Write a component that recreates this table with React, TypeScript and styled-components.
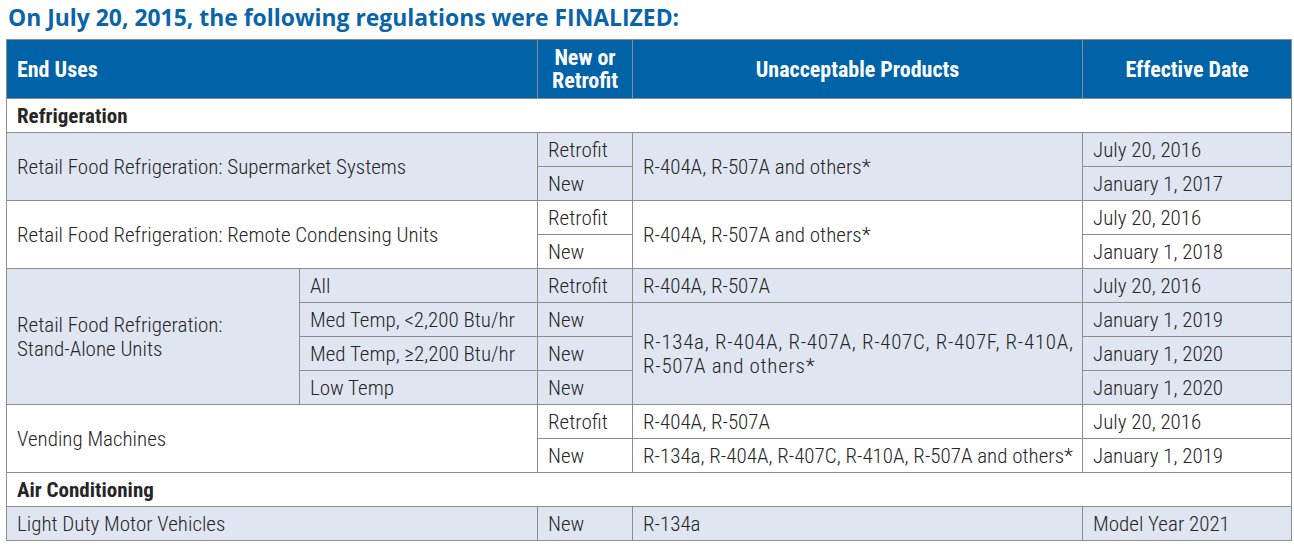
import React from 'react'
import styled, { createGlobalStyle } from 'styled-components'

const Global = createGlobalStyle`
  body {
    margin: 0;
    background: #ffffff;
    font-family: "Roboto Condensed", Roboto, sans-serif;
    color: #262626;
  }
`

const Page = styled.main`
  padding-left: 6px;
`

const Title = styled.h2`
  margin: 0 0 6px;
  padding: 3px 0 0 2px;
  font-family: 'Open Sans', sans-serif;
  font-size: 22.9px;
  line-height: 30px;
  font-weight: 700;
  color: #0a64a8;
  white-space: nowrap;
`

const Table = styled.table`
  width: 1285px;
  border-collapse: collapse;
  table-layout: fixed;
  font-size: 21px;
  font-weight: 300;
  line-height: 24px;
`

const HeadRow = styled.tr`
  height: 59px;
  background: #0063a8;
`

const HeadCell = styled.th<{ $align?: 'left' | 'center' }>`
  padding: 0 10px;
  border: 1px solid #8d8d8d;
  color: #ffffff;
  font-weight: 700;
  font-size: 22px;
  line-height: 23px;
  text-align: ${(p) => p.$align || 'center'};
  vertical-align: middle;
`

const Row = styled.tr<{ $shade?: boolean }>`
  height: 34px;
  background: ${(p) => (p.$shade ? '#dfe5f1' : '#ffffff')};
`

const Cell = styled.td<{ $wide?: boolean }>`
  padding: 1px 10px 0;
  border: 1px solid #8d8d8d;
  vertical-align: middle;
  white-space: nowrap;
  letter-spacing: ${(p) => (p.$wide ? '0.7px' : '0')};
`

const SectionCell = styled.td`
  padding: 1px 10px 0;
  border: 1px solid #8d8d8d;
  font-weight: 700;
  vertical-align: middle;
`

function App() {
  return (
    <Page>
      <Global />
      <Title>On July 20, 2015, the following regulations were FINALIZED:</Title>
      <Table>
        <colgroup>
          <col style={{ width: 293 }} />
          <col style={{ width: 238 }} />
          <col style={{ width: 95 }} />
          <col style={{ width: 450 }} />
          <col style={{ width: 209 }} />
        </colgroup>
        <thead>
          <HeadRow>
            <HeadCell colSpan={2} $align="left">
              End Uses
            </HeadCell>
            <HeadCell>
              New or
              <br />
              Retrofit
            </HeadCell>
            <HeadCell>Unacceptable Products</HeadCell>
            <HeadCell>Effective Date</HeadCell>
          </HeadRow>
        </thead>
        <tbody>
          <Row>
            <SectionCell colSpan={5}>Refrigeration</SectionCell>
          </Row>

          <Row $shade>
            <Cell colSpan={2} rowSpan={2}>
              Retail Food Refrigeration: Supermarket Systems
            </Cell>
            <Cell>Retrofit</Cell>
            <Cell rowSpan={2}>R-404A, R-507A and others*</Cell>
            <Cell>July 20, 2016</Cell>
          </Row>
          <Row $shade>
            <Cell>New</Cell>
            <Cell>January 1, 2017</Cell>
          </Row>

          <Row>
            <Cell colSpan={2} rowSpan={2}>
              Retail Food Refrigeration: Remote Condensing Units
            </Cell>
            <Cell>Retrofit</Cell>
            <Cell rowSpan={2}>R-404A, R-507A and others*</Cell>
            <Cell>July 20, 2016</Cell>
          </Row>
          <Row>
            <Cell>New</Cell>
            <Cell>January 1, 2018</Cell>
          </Row>

          <Row $shade>
            <Cell rowSpan={4}>
              Retail Food Refrigeration:
              <br />
              Stand-Alone Units
            </Cell>
            <Cell>All</Cell>
            <Cell>Retrofit</Cell>
            <Cell>R-404A, R-507A</Cell>
            <Cell>July 20, 2016</Cell>
          </Row>
          <Row $shade>
            <Cell>Med Temp, &lt;2,200 Btu/hr</Cell>
            <Cell>New</Cell>
            <Cell rowSpan={3} $wide>
              R-134a, R-404A, R-407A, R-407C, R-407F, R-410A,
              <br />
              R-507A and others*
            </Cell>
            <Cell>January 1, 2019</Cell>
          </Row>
          <Row $shade>
            <Cell>Med Temp, ≥2,200 Btu/hr</Cell>
            <Cell>New</Cell>
            <Cell>January 1, 2020</Cell>
          </Row>
          <Row $shade>
            <Cell>Low Temp</Cell>
            <Cell>New</Cell>
            <Cell>January 1, 2020</Cell>
          </Row>

          <Row>
            <Cell colSpan={2} rowSpan={2}>
              Vending Machines
            </Cell>
            <Cell>Retrofit</Cell>
            <Cell>R-404A, R-507A</Cell>
            <Cell>July 20, 2016</Cell>
          </Row>
          <Row>
            <Cell>New</Cell>
            <Cell>R-134a, R-404A, R-407C, R-410A, R-507A and others*</Cell>
            <Cell>January 1, 2019</Cell>
          </Row>

          <Row>
            <SectionCell colSpan={5}>Air Conditioning</SectionCell>
          </Row>
          <Row $shade>
            <Cell colSpan={2}>Light Duty Motor Vehicles</Cell>
            <Cell>New</Cell>
            <Cell>R-134a</Cell>
            <Cell>Model Year 2021</Cell>
          </Row>
        </tbody>
      </Table>
    </Page>
  )
}

export default App
